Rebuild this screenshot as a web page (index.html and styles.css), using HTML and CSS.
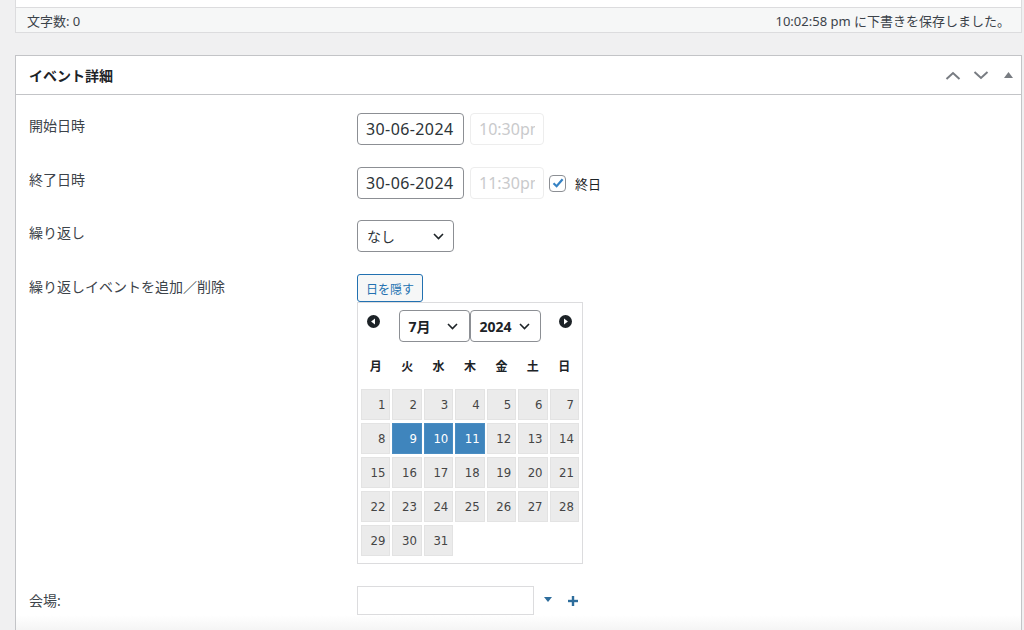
FILE: index.html
```html
<!DOCTYPE html>
<html lang="ja">
<head>
<meta charset="utf-8">
<title>イベント詳細</title>
<link rel="stylesheet" href="styles.css">
</head>
<body>
<div class="page">
  <div class="editor-end"></div>
  <div class="statusbar">
    <span>文字数: 0</span>
    <span>10:02:58 pm に下書きを保存しました。</span>
  </div>

  <div class="postbox">
    <div class="postbox-header">
      <h2>イベント詳細</h2>
      <div class="handles">
        <button class="handle" type="button" aria-label="上へ移動">
          <svg width="16" height="9" viewBox="0 0 16 9"><polyline points="1.5,8 8,2 14.5,8" fill="none" stroke="#787c82" stroke-width="2"/></svg>
        </button>
        <button class="handle" type="button" aria-label="下へ移動">
          <svg width="16" height="9" viewBox="0 0 16 9"><polyline points="1.5,1 8,7 14.5,1" fill="none" stroke="#787c82" stroke-width="2"/></svg>
        </button>
        <button class="handle handle-last" type="button" aria-label="パネルを切り替え">
          <svg width="9" height="6" viewBox="0 0 9 6"><polygon points="0,6 4.5,0 9,6" fill="#787c82"/></svg>
        </button>
      </div>
    </div>

    <div class="inside">
      <div class="row">
        <div class="label">開始日時</div>
        <div class="field">
          <input class="date" type="text" value="30-06-2024">
          <input class="time" type="text" value="10:30pm" disabled>
        </div>
      </div>

      <div class="row">
        <div class="label">終了日時</div>
        <div class="field">
          <input class="date" type="text" value="30-06-2024">
          <input class="time" type="text" value="11:30pm" disabled>
          <span class="checkbox">
            <svg width="14" height="14" viewBox="0 0 14 14"><polyline points="2.5,7.2 5.6,10.2 11.6,3.2" fill="none" stroke="#3582c4" stroke-width="2.2"/></svg>
          </span>
          <span class="check-label">終日</span>
        </div>
      </div>

      <div class="row row-tight">
        <div class="label">繰り返し</div>
        <div class="field">
          <div class="select select-repeat">
            <span>なし</span>
            <svg width="11" height="7" viewBox="0 0 11 7"><polyline points="1,1 5.5,5.5 10,1" fill="none" stroke="#1d2327" stroke-width="1.6"/></svg>
          </div>
        </div>
      </div>

      <div class="row">
        <div class="label">繰り返しイベントを追加／削除</div>
        <div class="field field-col">
          <button class="btn-small" type="button">日を隠す</button>
          <div class="cal">
            <div class="cal-head">
              <span class="cal-nav">
                <svg width="13" height="13" viewBox="0 0 14 14"><circle cx="7" cy="7" r="7" fill="#1d2327"/><polygon points="8.6,3.8 4.4,7 8.6,10.2" fill="#fff"/></svg>
              </span>
              <div class="cal-selects">
                <div class="select select-month">
                  <span>7月</span>
                  <svg width="11" height="7" viewBox="0 0 11 7"><polyline points="1,1 5.5,5.5 10,1" fill="none" stroke="#1d2327" stroke-width="1.6"/></svg>
                </div>
                <div class="select select-year">
                  <span>2024</span>
                  <svg width="11" height="7" viewBox="0 0 11 7"><polyline points="1,1 5.5,5.5 10,1" fill="none" stroke="#1d2327" stroke-width="1.6"/></svg>
                </div>
              </div>
              <span class="cal-nav">
                <svg width="13" height="13" viewBox="0 0 14 14"><circle cx="7" cy="7" r="7" fill="#1d2327"/><polygon points="5.4,3.8 9.6,7 5.4,10.2" fill="#fff"/></svg>
              </span>
            </div>
            <div class="cal-dow">
              <span>月</span><span>火</span><span>水</span><span>木</span><span>金</span><span>土</span><span>日</span>
            </div>
            <div class="cal-grid">
              <span class="day">1</span><span class="day">2</span><span class="day">3</span><span class="day">4</span><span class="day">5</span><span class="day">6</span><span class="day">7</span>
              <span class="day">8</span><span class="day sel">9</span><span class="day sel">10</span><span class="day sel">11</span><span class="day">12</span><span class="day">13</span><span class="day">14</span>
              <span class="day">15</span><span class="day">16</span><span class="day">17</span><span class="day">18</span><span class="day">19</span><span class="day">20</span><span class="day">21</span>
              <span class="day">22</span><span class="day">23</span><span class="day">24</span><span class="day">25</span><span class="day">26</span><span class="day">27</span><span class="day">28</span>
              <span class="day">29</span><span class="day">30</span><span class="day">31</span>
            </div>
          </div>
        </div>
      </div>

      <div class="row">
        <div class="label label-venue">会場:</div>
        <div class="field">
          <input class="venue" type="text" value="">
          <span class="venue-arrow">
            <svg width="8" height="5" viewBox="0 0 8 5"><polygon points="0,0 8,0 4,5" fill="#2e6d9c"/></svg>
          </span>
          <span class="venue-add">
            <svg width="10" height="10" viewBox="0 0 10 10"><rect x="3.8" y="0" width="2.4" height="10" fill="#2e6d9c"/><rect x="0" y="3.8" width="10" height="2.4" fill="#2e6d9c"/></svg>
          </span>
        </div>
      </div>
    </div>
    <div class="fade"></div>
  </div>
</div>
</body>
</html>
```

FILE: styles.css
```css
* { box-sizing: border-box; }

body {
  margin: 0;
  background: #f0f0f1;
  font-family: "Noto Sans", "Noto Sans CJK JP", sans-serif;
  color: #1d2327;
}

.page {
  padding: 0 2px 0 15px;
}

.editor-end {
  height: 7px;
  background: #fff;
  border-left: 1px solid #dcdcde;
  border-right: 1px solid #dcdcde;
}

.statusbar {
  display: flex;
  justify-content: space-between;
  align-items: center;
  height: 26px;
  padding: 0 11px 0 11px;
  background: #f6f7f7;
  border: 1px solid #dcdcde;
  font-size: 13px;
  color: #3c434a;
}

.postbox {
  margin-top: 22px;
  background: #fff;
  border: 1px solid #c3c4c7;
  border-bottom: 0;
}

.postbox-header {
  display: flex;
  justify-content: space-between;
  align-items: center;
  height: 39px;
  padding-left: 13px;
  border-bottom: 1px solid #c3c4c7;
}

.postbox-header h2 {
  margin: 0;
  font-size: 14px;
  font-weight: 700;
  color: #1d2327;
}

.handles {
  display: flex;
}

.handle {
  display: flex;
  align-items: center;
  justify-content: center;
  width: 28px;
  height: 38px;
  padding: 0;
  border: 0;
  background: none;
}

.handle-last {
  width: 26px;
}

.inside {
  display: flex;
  flex-direction: column;
  gap: 22px;
  padding: 18px 0 0 13px;
}

.row {
  display: grid;
  grid-template-columns: 328px 1fr;
}

.row-tight {
  margin-top: -1px;
}

.label {
  padding-top: 4px;
  font-size: 14px;
  line-height: 18px;
  color: #3c434a;
}

.label-venue {
  padding-top: 6px;
}

.field {
  display: flex;
  align-items: center;
}

.field-col {
  flex-direction: column;
  align-items: flex-start;
}

.date {
  width: 107px;
  height: 32px;
  padding: 0 8px;
  border: 1px solid #8c8f94;
  border-radius: 4px;
  background: #fff;
  font-family: "Noto Sans", sans-serif;
  font-size: 16px;
  letter-spacing: 0.4px;
  color: #2c3338;
}

.time {
  width: 74px;
  height: 32px;
  margin-left: 6px;
  padding: 0 8px;
  border: 1px solid #ededed;
  border-radius: 4px;
  background: #fff;
  font-family: "Noto Sans", sans-serif;
  font-size: 16px;
  color: #c9cacc;
  -webkit-text-fill-color: #c9cacc;
}

.checkbox {
  display: flex;
  align-items: center;
  justify-content: center;
  width: 17px;
  height: 17px;
  margin-left: 5px;
  border: 1px solid #8c8f94;
  border-radius: 4px;
  background: #fff;
}

.check-label {
  margin-left: 9px;
  font-size: 13px;
  color: #1d2327;
}

.select {
  display: flex;
  align-items: center;
  justify-content: space-between;
  height: 32px;
  border: 1px solid #8c8f94;
  border-radius: 4px;
  background: #fff;
  color: #2c3338;
}

.select-repeat {
  width: 97px;
  padding: 0 9px 0 9px;
  font-size: 14px;
}

.btn-small {
  height: 28px;
  padding: 0 8px;
  border: 1px solid #2271b1;
  border-radius: 3px;
  background: #f6f7f7;
  color: #2271b1;
  font-family: "Noto Sans CJK JP", sans-serif;
  font-size: 12px;
}

.cal {
  width: 226px;
  padding: 7px 3px 7px;
  border: 1px solid #dcdcde;
  background: #fff;
}

.cal-head {
  display: flex;
  justify-content: space-between;
  align-items: flex-start;
  padding: 0 7px 0 6px;
}

.cal-nav {
  display: flex;
  margin-top: 5px;
}

.cal-selects {
  display: flex;
}

.select-month,
.select-year {
  width: 71px;
  font-size: 14px;
  font-weight: 700;
  color: #1d2327;
}

.select-month {
  padding: 0 11px 0 9px;
}

.select-year {
  padding: 0 10px 0 9px;
}

.cal-dow {
  display: grid;
  grid-template-columns: repeat(7, 1fr);
  column-gap: 2px;
  height: 28px;
  margin-top: 11px;
  font-size: 12px;
  font-weight: 700;
  line-height: 28px;
  text-align: center;
  color: #1d2327;
}

.cal-grid {
  display: grid;
  grid-template-columns: repeat(7, 1fr);
  grid-auto-rows: 31px;
  column-gap: 2px;
  row-gap: 3px;
  margin-top: 8px;
}

.day {
  padding-right: 4px;
  border: 1px solid #e3e3e3;
  background: #ebebeb;
  font-family: "DejaVu Sans", sans-serif;
  font-stretch: condensed;
  font-size: 13px;
  line-height: 29px;
  text-align: right;
  color: #454545;
}

.day.sel {
  border-color: #4a8dc2;
  background: #3f85bd;
  color: #fff;
}

.venue {
  width: 177px;
  height: 29px;
  padding: 0 6px;
  border: 1px solid #dcdcde;
  background: #fff;
  font-size: 14px;
}

.venue-arrow {
  display: flex;
  margin-left: 10px;
  margin-top: -2px;
}

.venue-add {
  display: flex;
  margin-left: 16px;
}

.fade {
  height: 16px;
  background: linear-gradient(#fff, #f4f4f4);
}
```
